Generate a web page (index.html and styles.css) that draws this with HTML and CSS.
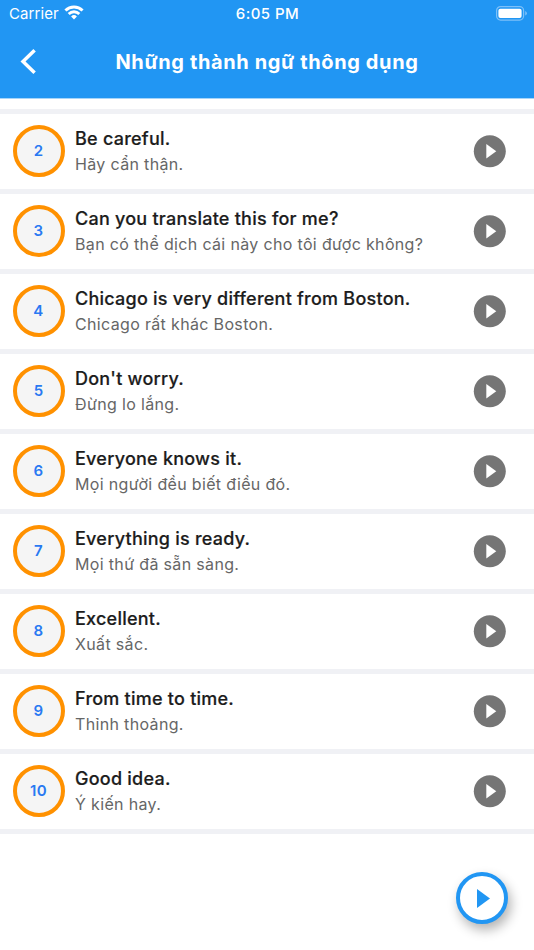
FILE: index.html
```html
<!DOCTYPE html>
<html lang="vi">
<head>
<meta charset="utf-8">
<title>Những thành ngữ thông dụng</title>
<link rel="stylesheet" href="styles.css">
</head>
<body>
<header class="header">
  <div class="status">
    <div class="carrier"><span>Carrier</span>
      <svg class="wifi" width="20" height="15" viewBox="0 0 20 15"><path d="M10 14.5 7.1 11.4a4.2 4.2 0 0 1 5.8 0zM5.7 9.9 3.7 7.9a9 9 0 0 1 12.6 0l-2 2a6.3 6.3 0 0 0-8.6 0zM2.5 6.5.4 4.4a13.8 13.8 0 0 1 19.2 0l-2.1 2.1a10.8 10.8 0 0 0-15 0z" fill="#fff"/></svg>
    </div>
    <div class="clock">6:05 PM</div>
    <div class="battery"><svg width="32" height="15" viewBox="0 0 32 15"><rect x=".6" y=".6" width="27" height="13.5" rx="4" fill="none" stroke="#7cc0f9" stroke-width="1.2"/><rect x="2.4" y="2.7" width="23.2" height="9.3" rx="2" fill="#fff"/><path d="M29.2 5q1.7.7 1.7 2.3t-1.7 2.3z" fill="#7cc0f9"/></svg></div>
  </div>
  <div class="bar">
    <svg class="back" width="18" height="28" viewBox="0 0 18 28"><path d="M15.6 2.2 4 13.5l11.6 11.3" fill="none" stroke="#fff" stroke-width="3.5"/></svg>
    <h1>Những thành ngữ thông dụng</h1>
  </div>
</header>
<main class="list" id="list"></main>
<button class="fab" aria-label="Play"><svg width="13" height="19" viewBox="0 0 13 19"><path d="M0 0v19l13-9.5z" fill="#2196f3"/></svg></button>
<script src="app.js"></script>
</body>
</html>
```
FILE: styles.css
```css
* { box-sizing: border-box; }
body { margin: 0; height: 950px; overflow: hidden; background: #fff; font-family: Inter, "Noto Sans", sans-serif; position: relative; }
.header { height: 99px; background: #2196f3; color: #fff; border-bottom: 1px solid #a6d5fa; }
.status { height: 27px; display: grid; grid-template-columns: 1fr auto 1fr; align-items: center; font-size: 15px; padding: 0 7px 0 9px; }
.carrier { display: flex; align-items: center; gap: 5px; letter-spacing: .1px; }
.wifi { margin-top: -2px; }
.clock { font-weight: 500; letter-spacing: .45px; padding-right: 1px; }
.battery { display: flex; justify-content: flex-end; margin-right: -1px; }
.bar { height: 70px; display: grid; grid-template-columns: 60px 1fr 60px; align-items: center; }
.back { margin-left: 19px; }
h1 { margin: 0; font-size: 20px; font-weight: 700; letter-spacing: .62px; text-align: center; white-space: nowrap; }
.list { padding-top: 10px; }
.row { height: 80px; border-top: 5px solid #f0f1f5; display: flex; align-items: center; padding: 0 28px 2px 13px; }
.row:last-child { height: 85px; border-bottom: 5px solid #f0f1f5; }
.num { width: 52px; height: 52px; border: 4px solid #ff9100; border-radius: 50%; background: #f5f5f5; color: #2979f2; font-size: 15px; font-weight: 600; letter-spacing: .3px; display: flex; align-items: center; justify-content: center; padding-right: 1px; }
.text { flex: 1; margin-left: 10px; padding-top: 1px; white-space: nowrap; }
.en { font-size: 18px; line-height: 26px; font-weight: 500; letter-spacing: .24px; color: #1c1c1c; -webkit-text-stroke: .2px #1c1c1c; }
.vi { font-size: 16px; line-height: 25px; letter-spacing: .34px; color: #666; }
.play { display: block; }
.fab { position: absolute; left: 456px; top: 872px; width: 52px; height: 52px; border: 4px solid #2196f3; border-radius: 50%; background: #fff; padding: 0 0 0 3px; display: flex; align-items: center; justify-content: center; box-shadow: 3px 6px 12px rgba(0,0,0,.3); }
```
FILE: app.js
```js
const phrases = [
  ["Be careful.", "Hãy cẩn thận."],
  ["Can you translate this for me?", "Bạn có thể dịch cái này cho tôi được không?"],
  ["Chicago is very different from Boston.", "Chicago rất khác Boston."],
  ["Don't worry.", "Đừng lo lắng."],
  ["Everyone knows it.", "Mọi người đều biết điều đó."],
  ["Everything is ready.", "Mọi thứ đã sẵn sàng."],
  ["Excellent.", "Xuất sắc."],
  ["From time to time.", "Thỉnh thoảng."],
  ["Good idea.", "Ý kiến hay."]
];
document.getElementById("list").innerHTML = phrases.map(([en, vi], i) => `
  <div class="row">
    <div class="num">${i + 2}</div>
    <div class="text"><div class="en">${en}</div><div class="vi">${vi}</div></div>
    <svg class="play" width="33" height="34" viewBox="0 0 33 34"><circle cx="16.8" cy="17.2" r="16" fill="#757575"/><path d="M13.3 9.9v14.6l10-7.3z" fill="#fff"/></svg>
  </div>`).join("");
```
